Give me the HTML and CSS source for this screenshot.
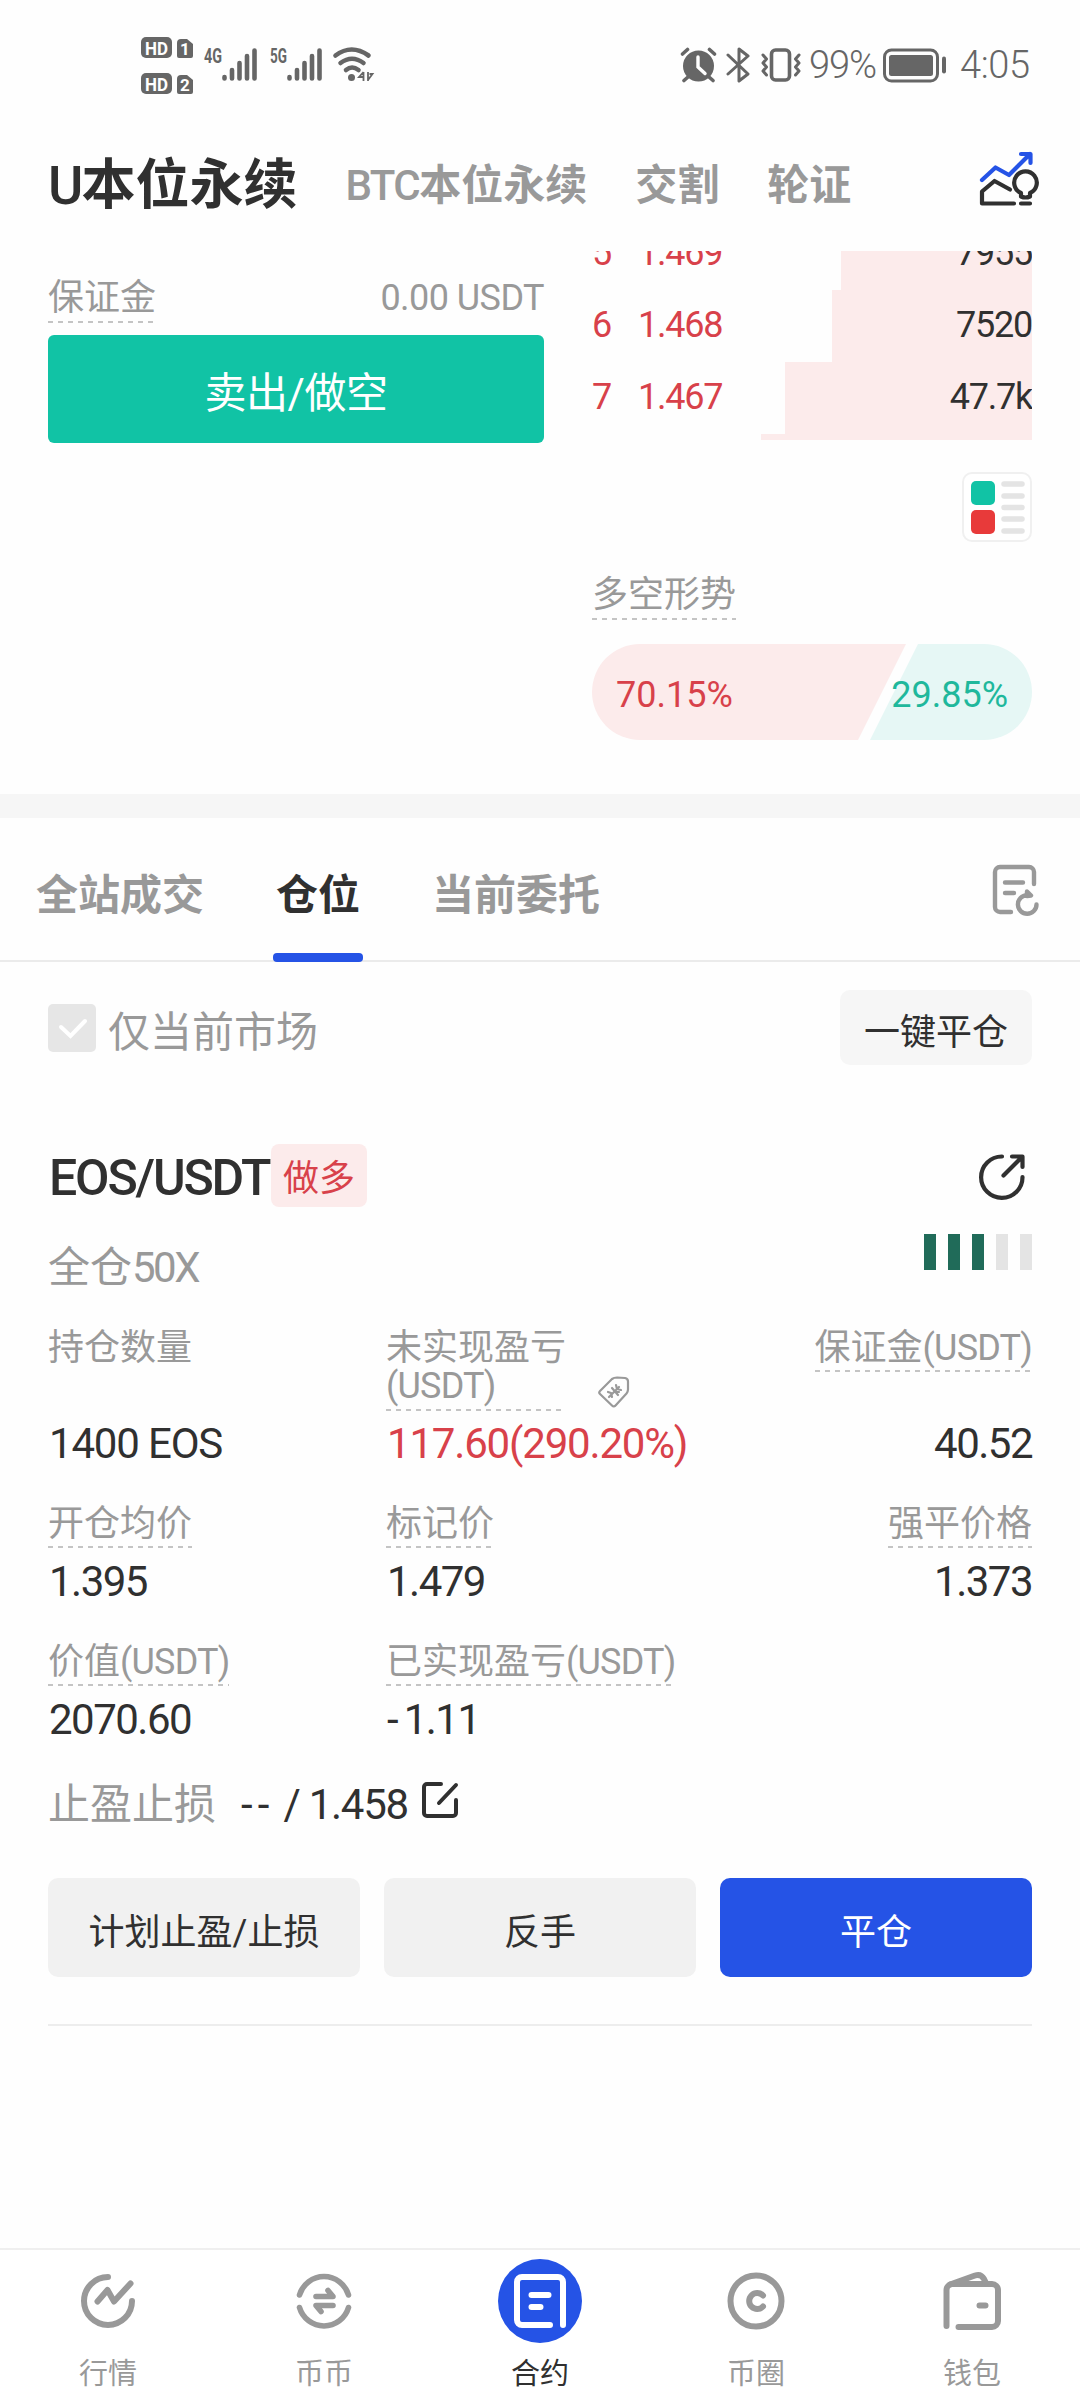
FILE: index.html
```
<!DOCTYPE html>
<html lang="zh-CN">
<head>
    <meta charset="UTF-8">
    <meta name="viewport" content="width=device-width, initial-scale=1.0">
    <title>合约</title>
    <link rel="stylesheet" href="styles.css">
</head>
<body>
    <div class="page">
        <!-- 状态栏 -->
        <div class="status-bar">
            <svg class="status-left" width="240" height="64" viewBox="0 0 240 64">
                <g fill="#666">
                    <rect x="0" y="0" width="31" height="21" rx="5"/>
                    <path d="M40 2h6l6 5v12a2 2 0 0 1-2 2H38a2 2 0 0 1-2-2V6a4 4 0 0 1 4-4z"/>
                    <rect x="0" y="36" width="31" height="21" rx="5"/>
                    <path d="M40 38h6l6 5v12a2 2 0 0 1-2 2H38a2 2 0 0 1-2-2V42a4 4 0 0 1 4-4z"/>
                </g>
                <g class="sim-text">
                    <text x="4" y="17.500" textLength="23" lengthAdjust="spacingAndGlyphs">HD</text>
                    <text x="39" y="18" font-size="17">1</text>
                    <text x="4" y="53.500" textLength="23" lengthAdjust="spacingAndGlyphs">HD</text>
                    <text x="39" y="54" font-size="17">2</text>
                </g>
                <g class="net-text">
                    <text x="63" y="26" textLength="18" lengthAdjust="spacingAndGlyphs">4G</text>
                    <text x="129" y="26" textLength="17" lengthAdjust="spacingAndGlyphs">5G</text>
                </g>
                <g stroke="#666" stroke-width="4.600" stroke-linecap="round" fill="none">
                    <path d="M83.500 40v1.500M91 33v8.500M98.500 26v15.500M106 19v22.500M113.500 13.500v28"/>
                    <path d="M148.500 40v1.500M156 33v8.500M163.500 26v15.500M171 19v22.500M178.500 13.500v28"/>
                    <path d="M194.500 18.500q16-12 33 0M199.500 26q11.500-8.500 23 0M205 33q6-5 12.500 0"/>
                </g>
                <circle cx="210.500" cy="40.500" r="3.500" fill="#666"/>
                <path d="M222.500 35v9M222.500 35l-4.500 5h4.500M227 35v9M227 43l4.500-6h-3" stroke="#666" stroke-width="1.800" fill="none"/>
            </svg>
            <div class="status-right">
                <svg class="ico-alarm" width="37" height="36" viewBox="0 0 37 36">
                    <circle cx="18.500" cy="19" r="15.500" fill="#666"/>
                    <path d="M2.500 7l5-4.500M34.500 7l-5-4.500M8 30l-4 3.500M29 30l4 3.500" stroke="#666" stroke-width="3.600" stroke-linecap="round"/>
                    <path d="M18 10v10l7 6.500" stroke="#fff" stroke-width="3.400" fill="none" stroke-linecap="round"/>
                </svg>
                <svg class="ico-bt" width="24" height="36" viewBox="0 0 24 36">
                    <path d="M2 8l20 19-9 7V2l9 7L2 27" stroke="#666" stroke-width="3" fill="none" stroke-linejoin="round" stroke-linecap="round"/>
                </svg>
                <svg class="ico-vib" width="40" height="36" viewBox="0 0 40 36">
                    <rect x="10.500" y="3" width="18" height="30" rx="4" stroke="#666" stroke-width="3.600" fill="none"/>
                    <path d="M2 8l3.500 4L2 16l3.500 4L2 24l3.500 4M38 8l-3.500 4 3.500 4-3.500 4 3.500 4-3.500 4" stroke="#666" stroke-width="3" fill="none" stroke-linecap="round" stroke-linejoin="round"/>
                </svg>
                <span class="battery-text">99%</span>
                <svg class="ico-battery" width="64" height="36" viewBox="0 0 64 36">
                    <rect x="1.500" y="3" width="53" height="31" rx="7" stroke="#666" stroke-width="3" fill="none"/>
                    <rect x="6" y="8" width="44" height="21" rx="2.500" fill="#666"/>
                    <path d="M61 11.500v13" stroke="#666" stroke-width="4" stroke-linecap="round"/>
                </svg>
                <span class="clock">4:05</span>
            </div>
        </div>

        <!-- 顶部导航 -->
        <header class="header">
            <nav class="market-nav">
                <a class="active"><span class="num">U</span>本位永续</a>
                <a><span class="num">BTC</span>本位永续</a>
                <a>交割</a>
                <a>轮证</a>
            </nav>
            <svg class="ico-chart" width="60" height="56" viewBox="0 0 60 56" fill="none" stroke-width="4.200" stroke-linecap="round" stroke-linejoin="round">
                <path d="M3 30l13.500-12.500L30 25l21-21M42 4h9.500v9" stroke="#2553e6"/>
                <path d="M31 39.500L15.500 31 3 41.500V53.500h32" stroke="#303030"/>
                <path d="M42 46.500v-3.500a11.300 11.300 0 1 1 9 0v3.500q-4.500 2-9 0zM42 53.500h9" stroke="#303030"/>
            </svg>
        </header>

        <section class="trade">
            <div class="order">
                <div class="margin-row">
                    <span class="hint">保证金</span>
                    <span class="num">0.00 USDT</span>
                </div>
                <button class="btn-sell">卖出/做空</button>
            </div>
            <div class="depth">
                <div class="book">
                    <div class="book-row">
                        <i class="bar" style="width: 191px"></i>
                        <span class="no">5</span><span class="price">1.469</span><span class="amount">7955</span>
                    </div>
                    <div class="book-row">
                        <i class="bar" style="width: 200px"></i>
                        <span class="no">6</span><span class="price">1.468</span><span class="amount">7520</span>
                    </div>
                    <div class="book-row">
                        <i class="bar" style="width: 247px"></i>
                        <span class="no">7</span><span class="price">1.467</span><span class="amount">47.7k</span>
                    </div>
                    <div class="book-row">
                        <i class="bar" style="width: 271px"></i>
                    </div>
                </div>
                <div class="book-mode">
                    <svg width="70" height="70" viewBox="0 0 70 70">
                        <rect x="1" y="1" width="68" height="68" rx="9" fill="#fff" stroke="#f0f0f0" stroke-width="2"/>
                        <rect x="9" y="9" width="24" height="24" rx="5" fill="#11c3a5"/>
                        <rect x="9" y="38" width="24" height="24" rx="5" fill="#e83a3a"/>
                        <path d="M42 12h18M42 24h18M42 35.500h18M42 47h18M42 59h18" stroke="#e4e4e4" stroke-width="5.500" stroke-linecap="round"/>
                    </svg>
                </div>
                <span class="hint trend-title">多空形势</span>
                <div class="trend">
                    <svg class="trend-bg" width="440" height="96" viewBox="0 0 440 96">
                        <path d="M48 0H314L266 96H48A48 48 0 0 1 48 0z" fill="#fcebeb"/>
                        <path d="M326 0H392A48 48 0 0 1 392 96H278z" fill="#e6f7f5"/>
                    </svg>
                    <span class="pct red">70.15%</span>
                    <span class="pct green">29.85%</span>
                </div>
            </div>
        </section>

        <!-- 仓位列表 -->
        <div class="tabs">
            <a>全站成交</a>
            <a class="active">仓位</a>
            <a>当前委托</a>
            <svg class="ico-history" width="50" height="52" viewBox="0 0 50 52" fill="none" stroke="#999" stroke-width="4.400" stroke-linecap="round" stroke-linejoin="round">
                <path d="M42 20V8a5 5 0 0 0-5-5H8a5 5 0 0 0-5 5v35a5 5 0 0 0 5 5h11"/>
                <path d="M13 18.500h18M13 29h9"/>
                <path d="M44.500 40.500A9.300 9.300 0 1 1 35 31.200M35 27.500l4 4-4 .5z"/>
            </svg>
        </div>

        <div class="filter">
            <span class="check">
                <svg width="48" height="48" viewBox="0 0 48 48"><path d="M13 23l9.500 9L37 17" stroke="#fff" stroke-width="4" fill="none" stroke-linecap="round"/></svg>
            </span>
            <span class="filter-text">仅当前市场</span>
            <button class="btn-close-all">一键平仓</button>
        </div>

        <article class="position">
            <div class="pos-head">
                <span class="symbol">EOS/USDT</span>
                <span class="side">做多</span>
                <svg class="ico-share" width="48" height="48" viewBox="0 0 48 48" fill="none" stroke="#303030" stroke-width="4.200" stroke-linecap="round" stroke-linejoin="round">
                    <path d="M24 3.500A20.700 20.700 0 1 0 44.500 24"/>
                    <path d="M25.500 22.500L43 5M34 3.500h10.500V14"/>
                </svg>
            </div>
            <div class="pos-sub">
                <span>全仓<span class="lever">50X</span></span>
                <div class="risk"><i class="on"></i><i class="on"></i><i class="on"></i><i></i><i></i></div>
            </div>

            <div class="row row-tall">
                <div class="cell"><span class="label">持仓数量</span><span class="value wide">1400 EOS</span></div>
                <div class="cell">
                    <div class="label-line">
                        <span class="label two-line hint">未实现盈亏<br><span class="num">(USDT)</span></span>
                        <svg class="ico-tag" width="34" height="34" viewBox="0 0 34 34" fill="none" stroke="#999" stroke-width="2.200" stroke-linejoin="round" stroke-linecap="round">
                            <path d="M3 16L15 4q2-1.500 5-1.500l8 .5q3 .5 3 3.500v8q0 2-1.500 4L19 30q-2 2.500-4 .5L3 19q-1.500-1.500 0-3z"/>
                            <path d="M12 22l10-10M11 17l3 1 1 4M15 13l6 7M19 10l1 4 4 1M18 17h4"/>
                        </svg>
                    </div>
                    <span class="value wide red">117.60(290.20%)</span>
                </div>
                <div class="cell"><span class="label hint">保证金<span class="num">(USDT)</span></span><span class="value">40.52</span></div>
            </div>
            <div class="row">
                <div class="cell"><span class="label hint">开仓均价</span><span class="value">1.395</span></div>
                <div class="cell"><span class="label hint">标记价</span><span class="value">1.479</span></div>
                <div class="cell"><span class="label hint">强平价格</span><span class="value">1.373</span></div>
            </div>
            <div class="row">
                <div class="cell"><span class="label hint">价值<span class="num">(USDT)</span></span><span class="value">2070.60</span></div>
                <div class="cell"><span class="label hint">已实现盈亏<span class="num">(USDT)</span></span><span class="value"><span class="dash">-</span>1.11</span></div>
            </div>

            <div class="tpsl">
                <span class="tpsl-label">止盈止损</span>
                <span class="tpsl-value"><span class="dash">--</span> / 1.458</span>
                <svg width="38" height="38" viewBox="0 0 38 38" fill="none" stroke="#303030" stroke-width="4" stroke-linecap="round" stroke-linejoin="round">
                    <path d="M20 3H6a3 3 0 0 0-3 3v26a3 3 0 0 0 3 3h26a3 3 0 0 0 3-3V19M18 22L35 4"/>
                </svg>
            </div>

            <div class="actions">
                <button>计划止盈/止损</button>
                <button>反手</button>
                <button class="primary">平仓</button>
            </div>
        </article>

        <!-- 底部导航 -->
        <footer class="tabbar">
            <a>
                <svg width="84" height="84" viewBox="0 0 84 84" fill="none" stroke="#999" stroke-width="6" stroke-linecap="round" stroke-linejoin="round">
                    <path d="M42 18A24 24 0 1 0 66 42M31.500 42.500l10-11.500L48 42.500l16.500-18"/>
                </svg>
                <span>行情</span>
            </a>
            <a>
                <svg width="84" height="84" viewBox="0 0 84 84" fill="none" stroke="#999" stroke-width="5.600" stroke-linecap="round" stroke-linejoin="round">
                    <path d="M17.500 36A25.500 25.500 0 0 1 66.500 36M17.500 48.500A25.500 25.500 0 0 0 66.500 48.500"/>
                    <path d="M34 37.500h17l-5-6M51 46.500H34l5 6"/>
                </svg>
                <span>币币</span>
            </a>
            <a class="active">
                <svg width="84" height="84" viewBox="0 0 84 84" fill="none" stroke="#fff" stroke-width="6" stroke-linecap="round" stroke-linejoin="round">
                    <circle cx="42" cy="42" r="42" fill="#2553e6" stroke="none"/>
                    <path d="M52 66H24a5 5 0 0 1-5-5V23a5 5 0 0 1 5-5h36a5 5 0 0 1 5 5v43"/>
                    <path d="M33.500 36h17M33.500 48h9"/>
                </svg>
                <span>合约</span>
            </a>
            <a>
                <svg width="84" height="84" viewBox="0 0 84 84" fill="none" stroke="#999" stroke-width="6" stroke-linecap="round">
                    <circle cx="42" cy="42" r="25.500"/>
                    <path d="M49 36.500a8 8 0 1 0 0 11"/>
                </svg>
                <span>币圈</span>
            </a>
            <a>
                <svg width="84" height="84" viewBox="0 0 84 84" fill="none" stroke="#999" stroke-width="6" stroke-linecap="round" stroke-linejoin="round">
                    <path d="M16.500 67V31a6 6 0 0 1 6-6H62a6 6 0 0 1 6 6v31a6 6 0 0 1-6 6H28.500"/>
                    <path d="M20 25.500L45 16.500q6-2 9 3.500l2 4M49.500 46.500h6"/>
                </svg>
                <span>钱包</span>
            </a>
        </footer>
    </div>
</body>
</html>
```
FILE: styles.css
```
* {
    margin: 0;
    padding: 0;
    box-sizing: border-box;
}
body {
    font-family: Roboto, "Noto Sans CJK SC", sans-serif;
    font-size: 36px;
    color: #303030;
    background: #fefefe;
}
svg {
    display: block;
    flex-shrink: 0;
}
i {
    font-style: normal;
}
button {
    border: none;
    font-family: inherit;
    font-size: 36px;
    color: #303030;
}
.page {
    width: 1080px;
    height: 2400px;
    display: flex;
    flex-direction: column;
    overflow: hidden;
}
.num {
    letter-spacing: -0.022em;
}
.red {
    color: #d8414a;
}
.green {
    color: #1fb89c;
}
/* 虚线下划线 */
.hint {
    background: repeating-linear-gradient(90deg, #c4c4c4 0 5px, transparent 5px 10px) left bottom / 100% 2px no-repeat;
}

/* 状态栏 */
.status-bar {
    height: 130px;
    padding: 37px 50px 0 141px;
    display: flex;
    justify-content: space-between;
    align-items: flex-start;
    flex-shrink: 0;
}
.sim-text {
    fill: #fff;
    font-size: 19px;
    font-weight: 700;
}
.net-text {
    fill: #666;
    font-size: 20px;
    font-weight: 700;
}
.status-right {
    display: flex;
    align-items: center;
    height: 56px;
    color: #666;
    font-size: 38px;
    font-weight: 300;
    line-height: 58px;
}
.ico-alarm {
    margin-left: -2px;
}
.ico-bt {
    margin-left: 9px;
}
.ico-vib {
    margin-left: 11px;
}
.battery-text {
    width: 70px;
    margin-left: 8px;
    letter-spacing: -0.03em;
}
.ico-battery {
    margin-left: 4px;
}
.clock {
    width: 70px;
    margin-left: 13px;
    letter-spacing: -0.01em;
}

/* 顶部导航 */
.header {
    height: 121px;
    padding: 0 41px 0 48px;
    display: flex;
    justify-content: space-between;
    flex-shrink: 0;
}
.market-nav {
    display: flex;
    gap: 48px;
    font-size: 42px;
    font-weight: 700;
    color: #999;
    line-height: 111px;
}
.market-nav .num {
    font-weight: 500;
    letter-spacing: -0.036em;
}
.market-nav .active {
    font-size: 54px;
    color: #303030;
}
.ico-chart {
    margin-top: 20px;
}

/* 下单 + 盘口 */
.trade {
    height: 543px;
    padding: 0 48px;
    display: flex;
    justify-content: space-between;
    flex-shrink: 0;
}
.order {
    width: 496px;
    padding-top: 25px;
}
.margin-row {
    display: flex;
    justify-content: space-between;
    line-height: 45px;
    color: #999;
}
.margin-row .hint {
    height: 47px;
}
.margin-row .num {
    letter-spacing: -0.015em;
}
.btn-sell {
    width: 100%;
    height: 108px;
    margin-top: 12px;
    border-radius: 6px;
    background: #11c3a5;
    color: #fff;
    font-size: 42px;
    letter-spacing: -0.01em;
}
.depth {
    width: 440px;
}
.book {
    height: 189px;
    overflow: hidden;
}
.book-row {
    position: relative;
    display: flex;
    height: 72px;
    line-height: 70px;
    letter-spacing: -0.034em;
}
.book-row:first-child {
    margin-top: -33px;
}
.bar {
    position: absolute;
    top: 0;
    right: 0;
    height: 72px;
    background: #fcebeb;
}
.no,
.price {
    color: #d8414a;
}
.no {
    width: 46px;
}
.amount {
    position: relative;
    margin-left: auto;
}
.book-mode {
    display: flex;
    justify-content: flex-end;
    margin-top: 32px;
}
.trend-title {
    display: inline-block;
    height: 46px;
    margin-top: 32px;
    line-height: 43px;
    color: #999;
}
.trend {
    position: relative;
    display: flex;
    justify-content: space-between;
    height: 96px;
    margin-top: 24px;
    padding: 0 24px;
    line-height: 102px;
}
.pct {
    position: relative;
}
.trend-bg {
    position: absolute;
    top: 0;
    left: 0;
}

/* 标签页 */
.tabs {
    display: flex;
    gap: 66px;
    height: 168px;
    padding: 0 38px 0 36px;
    border-top: 24px solid #f6f6f6;
    border-bottom: 2px solid #ebebeb;
    font-size: 42px;
    font-weight: 700;
    line-height: 155px;
    color: #999;
    flex-shrink: 0;
}
.tabs .active {
    position: relative;
    color: #303030;
    margin: 0 6px;
}
.tabs .active::after {
    content: "";
    position: absolute;
    left: -3px;
    right: -3px;
    bottom: -2px;
    height: 9px;
    border-radius: 4px;
    background: #2553e6;
}
.ico-history {
    margin: 46px 0 0 auto;
}

.filter {
    display: flex;
    align-items: flex-start;
    height: 182px;
    padding: 28px 48px 0;
    flex-shrink: 0;
}
.check {
    width: 48px;
    height: 48px;
    margin-top: 14px;
    border-radius: 5px;
    background: #e6e6e6;
}
.filter-text {
    margin-left: 12px;
    font-size: 42px;
    line-height: 85px;
    color: #999;
}
.btn-close-all {
    width: 192px;
    height: 75px;
    margin-left: auto;
    padding-top: 3px;
    border-radius: 10px;
    background: #f6f6f6;
}

/* 仓位卡片 */
.position {
    height: 882px;
    margin: 0 48px;
    border-bottom: 2px solid #ededed;
    flex-shrink: 0;
}
.pos-head {
    display: flex;
    height: 63px;
}
.symbol {
    width: 223px;
    padding-left: 1px;
    font-size: 50px;
    font-weight: 500;
    line-height: 69px;
    letter-spacing: -0.043em;
    white-space: nowrap;
}
.side {
    width: 96px;
    border-radius: 8px;
    background: #fcebeb;
    color: #d8414a;
    text-align: center;
    line-height: 71px;
}
.ico-share {
    margin: 9px 6px 0 auto;
}
.pos-sub {
    display: flex;
    justify-content: space-between;
    height: 109px;
    font-size: 42px;
    line-height: 121px;
    color: #999;
}
.lever {
    letter-spacing: -0.06em;
}
.risk {
    display: flex;
    gap: 12px;
    margin-top: 27px;
}
.risk i {
    width: 12px;
    height: 36px;
    background: #e4e4e4;
}
.risk .on {
    background: #206b59;
}
.row {
    display: grid;
    grid-template-columns: 338px 323px 323px;
    height: 138px;
}
.row-tall {
    height: 176px;
}
.cell {
    display: flex;
    flex-direction: column;
    align-items: flex-start;
    justify-content: space-between;
    padding: 10px 0 24px;
}
.cell:nth-child(3) {
    align-items: flex-end;
}
.label {
    height: 46px;
    line-height: 44px;
    color: #999;
    white-space: nowrap;
}
.label-line {
    display: flex;
    align-items: flex-end;
    gap: 35px;
}
.two-line {
    width: 176px;
    height: 85px;
    line-height: 38px;
    padding-top: 3px;
}
.ico-tag {
    margin-bottom: 2px;
}
.value {
    padding-left: 1px;
    font-size: 42px;
    line-height: 48px;
    letter-spacing: -0.036em;
    white-space: nowrap;
}
.value.wide {
    letter-spacing: -0.028em;
}
.dash {
    letter-spacing: 0.12em;
}
.tpsl {
    display: flex;
    height: 110px;
    font-size: 42px;
    line-height: 74px;
}
.tpsl-label {
    width: 193px;
    color: #999;
}
.tpsl-value {
    width: 180px;
    letter-spacing: -0.03em;
    white-space: nowrap;
}
.tpsl svg {
    margin-top: 13px;
}
.actions {
    display: grid;
    grid-template-columns: repeat(3, 1fr);
    gap: 24px;
}
.actions button {
    height: 99px;
    padding-top: 2px;
    border-radius: 10px;
    background: #f1f1f1;
}
.actions .primary {
    background: #2553e6;
    color: #fff;
}

/* 底部导航 */
.tabbar {
    display: flex;
    height: 152px;
    margin-top: auto;
    border-top: 2px solid #efefef;
    background: #fff;
    flex-shrink: 0;
}
.tabbar a {
    flex: 1;
    display: flex;
    flex-direction: column;
    align-items: center;
    padding-top: 9px;
    font-size: 29px;
    line-height: 62px;
    color: #999;
}
.tabbar .active {
    color: #303030;
}
```
